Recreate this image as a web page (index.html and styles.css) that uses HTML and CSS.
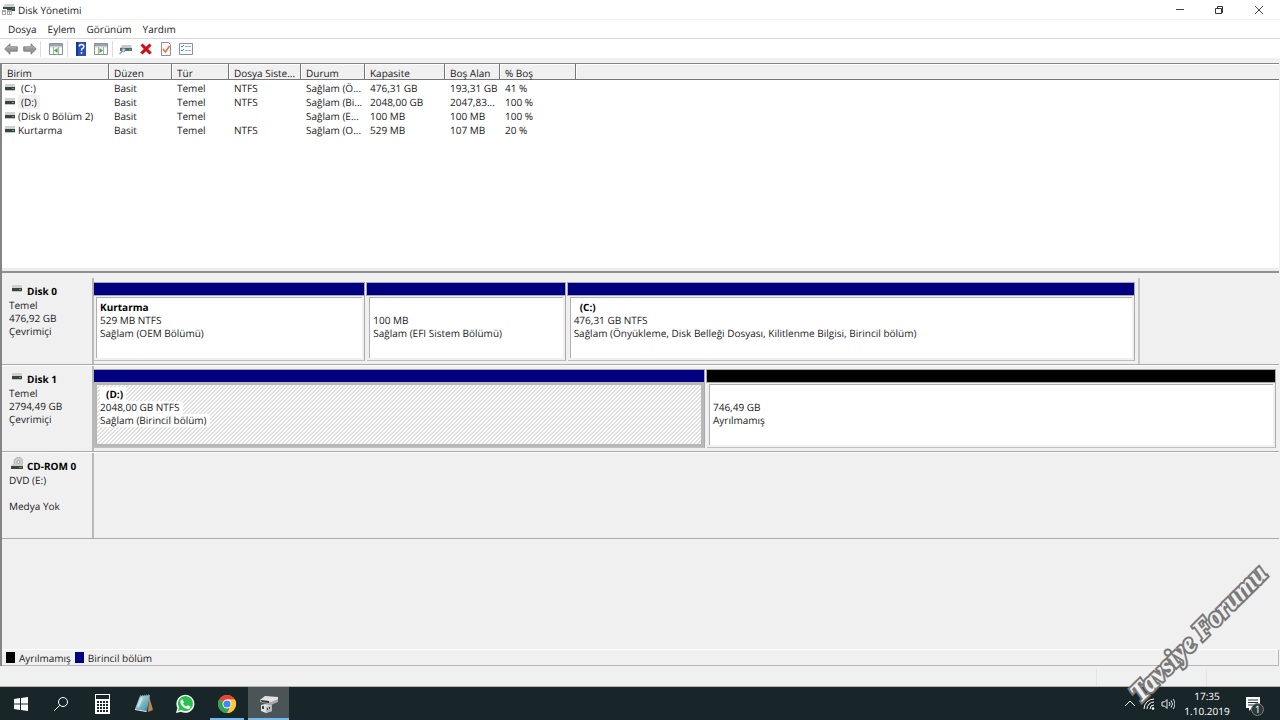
FILE: index.html
```html
<!DOCTYPE html>
<html lang="tr">
<head>
<meta charset="utf-8">
<meta name="viewport" content="width=device-width, initial-scale=1">
<title>Disk Yönetimi</title>
<link rel="stylesheet" href="styles.css">
</head>
<body>
<svg class="defs" aria-hidden="true">
  <defs>
    <linearGradient id="note" x1="0" y1="0" x2="1" y2="1"><stop offset="0" stop-color="#d6edf3"/><stop offset="1" stop-color="#2f86a0"/></linearGradient>
    <symbol id="drive" viewBox="0 0 12 7"><path d="M1 0h10v3H1z" fill="#d0d0d0"/><path d="M1 3h10v3H1z" fill="#3c4145"/><path d="M1 6h10v1H1z" fill="#c5c5c5"/><path d="M8 4h2v1H8z" fill="#35c840"/></symbol>
    <symbol id="panel" viewBox="0 0 14 12"><path d="M.5.5h13v11H.5z" fill="#fafafa" stroke="#8b9196"/><path d="M1 1h12v2H1z" fill="#9aa3aa"/><path d="M1 3h12v1.500H1z" fill="#cfd3d6"/><path d="M4.500 4v7M9.500 4v7" stroke="#a8adb1"/></symbol>
    <symbol id="arrow" viewBox="0 0 14 12"><path d="M.7 6 6 .8v3h7.300v4.400H6v3z" fill="#969696" stroke="#747474" stroke-width=".8"/><path d="M2.500 5.600 5.300 3v1.800h7" fill="none" stroke="#bbb" stroke-width=".8"/></symbol>
  </defs>
</svg>
<div class="window">
  <header class="titlebar">
    <svg class="app-icon" viewBox="0 0 13 13"><path d="M3 1h9l1 3H1z" fill="#cfcfcf"/><path d="M1 4h12v4H5V6H1z" fill="#41484b"/><path d="M10 5h2v1h-2z" fill="#39be42"/><path d="M0 7h4v5H0zM5 7h5v5H5z" fill="#a6a6a6"/><path d="M1 9h2v2H1zM6 9h1v2H6zM8 9h1v2H8z" fill="#fff"/></svg>
    <h1 class="title">Disk Yönetimi</h1>
    <div class="window-buttons">
      <button class="window-button" aria-label="Simge durumuna küçült"><svg viewBox="0 0 10 10"><path d="M1 4.500h8" stroke="#444"/></svg></button>
      <button class="window-button" aria-label="Önceki boyut"><svg viewBox="0 0 10 10"><path d="M1.500 3.500h6v5h-6zM3.500 3V1.500h5v6H8" fill="none" stroke="#333"/></svg></button>
      <button class="window-button" aria-label="Kapat"><svg viewBox="0 0 10 10"><path d="m1 1 8 8M9 1 1 9" stroke="#333" stroke-width=".9"/></svg></button>
    </div>
  </header>
  <nav class="menubar">
    <button class="menu">Dosya</button><button class="menu">Eylem</button><button class="menu">Görünüm</button><button class="menu">Yardım</button>
  </nav>
  <div class="toolbar" role="toolbar">
    <div class="tool-group">
      <button class="tool" aria-label="Geri"><svg viewBox="0 0 14 12"><use href="#arrow"/></svg></button>
      <button class="tool" aria-label="İleri"><svg viewBox="0 0 14 12"><g transform="translate(14 0) scale(-1 1)"><use href="#arrow"/></g></svg></button>
    </div>
    <div class="tool-group">
      <button class="tool" aria-label="Konsol ağacı"><svg viewBox="0 0 14 12"><use href="#panel"/><path d="m8.500 5-3.500 2.500L8.500 10z" fill="#3da936"/></svg></button>
    </div>
    <div class="tool-group">
      <button class="tool" aria-label="Yardım"><svg viewBox="0 0 14 14"><path d="M2 0h10v14H2z" fill="#2850b5"/><path d="M2 0h2v14H2z" fill="#153a95"/><path d="M5.300 4.500Q5.300 2.500 7.500 2.500T9.800 4.500Q9.800 6 8.200 6.700 7.500 7.200 7.500 8.500M7.500 10v1.700" fill="none" stroke="#fff" stroke-width="1.500"/></svg></button>
      <button class="tool" aria-label="Eylem bölmesi"><svg viewBox="0 0 14 12"><use href="#panel"/><path d="m5.500 5 3.500 2.500L5.500 10z" fill="#3da936"/></svg></button>
    </div>
    <div class="tool-group">
      <button class="tool" aria-label="Diskleri yeniden tara"><svg viewBox="0 0 14 12"><path d="M3 2h9l1 3H1z" fill="#c4c9cc"/><path d="M1 5h12v3H1z" fill="#55666c"/><path d="M10 6h2v1h-2z" fill="#3dd34b"/><circle cx="4.500" cy="7" r="1.800" fill="#bdd6e2" stroke="#778b94"/><path d="m3 8.500-2.500 2.500" stroke="#7b9eae" stroke-width="1.500"/></svg></button>
      <button class="tool" aria-label="Sil"><svg viewBox="0 0 14 12"><path d="m1.500 2.500 2-2L7 3.700 10.500.5l2 2L9.200 6l3.600 3.500-2.300 2L7 8.300l-3.500 3.200-2.300-2L4.800 6z" fill="#d50c16"/></svg></button>
      <button class="tool" aria-label="Özellikler"><svg viewBox="0 0 14 14"><path d="M2.500.500h7l2 2v11h-9z" fill="#f7f8fa" stroke="#8c929b"/><path d="m4 7 2.500 3 4-6" fill="none" stroke="#ee7034" stroke-width="1.500"/></svg></button>
      <button class="tool" aria-label="Tüm görevler"><svg viewBox="0 0 14 12"><path d="M.5.500h13v11H.5z" fill="#f7faff" stroke="#87939f"/><path d="m2 3 1 1 2-2M2 7l1 1 2-2" fill="none" stroke="#298be5"/><path d="M6 3.500h6M6 7.500h6" stroke="#a5b8ca"/></svg></button>
    </div>
  </div>
  <main class="console">
    <section class="volumes">
      <table class="volume-table">
        <colgroup><col class="c-name"><col class="c-layout"><col class="c-type"><col class="c-fs"><col class="c-status"><col class="c-capacity"><col class="c-free"><col class="c-percent"><col></colgroup>
        <thead><tr><th>Birim</th><th>Düzen</th><th>Tür</th><th>Dosya Siste...</th><th>Durum</th><th>Kapasite</th><th>Boş Alan</th><th>% Boş</th><th></th></tr></thead>
        <tbody>
          <tr><td><div class="volume"><svg class="drive"><use href="#drive"/></svg><span class="letter">(C:)</span></div></td><td>Basit</td><td>Temel</td><td>NTFS</td><td>Sağlam (Ö...</td><td>476,31 GB</td><td>193,31 GB</td><td>41 %</td><td></td></tr>
          <tr><td><div class="volume"><svg class="drive"><use href="#drive"/></svg><span class="letter selected">(D:)</span></div></td><td>Basit</td><td>Temel</td><td>NTFS</td><td>Sağlam (Bi...</td><td>2048,00 GB</td><td>2047,83...</td><td>100 %</td><td></td></tr>
          <tr><td><div class="volume"><svg class="drive"><use href="#drive"/></svg><span>(Disk 0 Bölüm 2)</span></div></td><td>Basit</td><td>Temel</td><td></td><td>Sağlam (E...</td><td>100 MB</td><td>100 MB</td><td>100 %</td><td></td></tr>
          <tr><td><div class="volume"><svg class="drive"><use href="#drive"/></svg><span>Kurtarma</span></div></td><td>Basit</td><td>Temel</td><td>NTFS</td><td>Sağlam (O...</td><td>529 MB</td><td>107 MB</td><td>20 %</td><td></td></tr>
        </tbody>
      </table>
    </section>
    <section class="disks">
      <article class="disk">
        <div class="disk-label"><h2 class="disk-name"><svg class="drive"><use href="#drive"/></svg>Disk 0</h2><p>Temel</p><p>476,92 GB</p><p>Çevrimiçi</p></div>
        <div class="partitions short">
          <div class="partition recovery"><div class="bar"></div><div class="info"><b>Kurtarma</b><span>529 MB NTFS</span><span>Sağlam (OEM Bölümü)</span></div></div>
          <div class="partition efi"><div class="bar"></div><div class="info"><b></b><span>100 MB</span><span>Sağlam (EFI Sistem Bölümü)</span></div></div>
          <div class="partition system"><div class="bar"></div><div class="info"><b class="indent">(C:)</b><span>476,31 GB NTFS</span><span>Sağlam (Önyükleme, Disk Belleği Dosyası, Kilitlenme Bilgisi, Birincil bölüm)</span></div></div>
        </div>
      </article>
      <article class="disk">
        <div class="disk-label"><h2 class="disk-name"><svg class="drive"><use href="#drive"/></svg>Disk 1</h2><p>Temel</p><p>2794,49 GB</p><p>Çevrimiçi</p></div>
        <div class="partitions">
          <div class="partition data"><div class="bar"></div><div class="info hatched"><b class="indent">(D:)</b><span>2048,00 GB NTFS</span><span>Sağlam (Birincil bölüm)</span></div></div>
          <div class="partition unallocated"><div class="bar black"></div><div class="info"><b></b><span>746,49 GB</span><span>Ayrılmamış</span></div></div>
        </div>
      </article>
      <article class="disk">
        <div class="disk-label"><h2 class="disk-name"><svg class="cdrom" viewBox="0 0 12 14"><circle cx="7.500" cy="5" r="4.500" fill="#d1d3d3" stroke="#929898" stroke-width=".7"/><circle cx="7.500" cy="5" r="1.500" fill="#fff" stroke="#999"/><path d="M2 7h8l2 2H0z" fill="#ccc"/><path d="M0 9h12v3H0z" fill="#3c4145"/><path d="M8 10h3v1H8z" fill="#35c840"/></svg>CD-ROM 0</h2><p>DVD (E:)</p><p></p><p>Medya Yok</p></div>
      </article>
    </section>
    <footer class="legend"><span class="swatch black"></span><span>Ayrılmamış</span><span class="swatch"></span><span>Birincil bölüm</span></footer>
  </main>
  <div class="statusbar"><span class="status-cell"></span></div>
</div>
<footer class="taskbar">
  <nav class="apps">
    <button class="task" aria-label="Başlat"><svg viewBox="0 0 20 20"><path d="m3 5 6-1v5.500H3zM10 4l7-1v6.500h-7zM3 10.500h6V16l-6-1zM10 10.500h7V17l-7-1z" fill="#fff"/></svg></button>
    <button class="task" aria-label="Ara"><svg viewBox="0 0 20 20"><circle cx="11" cy="8" r="4.500" fill="none" stroke="#fff"/><path d="m7.700 11.300-5.500 5.500" stroke="#fff"/></svg></button>
    <button class="task" aria-label="Hesap Makinesi"><svg viewBox="0 0 20 20"><path d="M2 0h15v20H2z" fill="#fff"/><path d="M3 1h13v4H3z" fill="#192629"/><path d="M4 7h2v2H4zm3 0h2v2H7zm3 0h2v2h-2zm3 0h2v2h-2zM4 10h2v2H4zm3 0h2v2H7zm3 0h2v2h-2zm3 0h2v2h-2zM4 13h2v2H4zm3 0h2v2H7zm3 0h2v2h-2zm3 0h2v2h-2zM4 16h2v2H4zm3 0h2v2H7zm3 0h2v2h-2zm3 0h2v2h-2z" fill="#192629"/></svg></button>
    <button class="task" aria-label="Not Defteri"><svg viewBox="0 0 20 20"><path d="m15 2 4 14-5 2z" fill="#b9864f"/><path d="M6 2 16 1l-3 16-12-2z" fill="url(#note)"/><path d="m1 15 12 2-1 1-11-2z" fill="#e6f0f2"/><path d="m6 2 10-1" stroke="#85959b" stroke-width="1.500" stroke-dasharray="1 1"/><path d="M8 4 4 13" stroke="#eaf8fb" opacity=".6" stroke-width="2"/></svg></button>
    <button class="task" aria-label="WhatsApp"><svg viewBox="0 0 20 20"><path d="m1 19 1.400-5A9 9 0 1 1 6 17.700z" fill="#fff"/><path d="m3 17 1-3.500A7.500 7.500 0 1 1 6.500 16z" fill="#27c34b"/><path d="M7.500 5.300 8.900 8.500 8 9.700q1.300 2.100 3.400 2.900l1.300-1.300 2.900 1.500q-.3 2.400-3 2.200Q7.200 13.800 5.500 9q-.7-3 2-3.700z" fill="#fff"/></svg></button>
    <button class="task running" aria-label="Google Chrome"><svg viewBox="0 0 20 20"><circle cx="10" cy="10" r="9" fill="#fcc934"/><path d="M10 10 2.200 5.500A9 9 0 0 1 17.800 5.500H10z" fill="#e94335"/><path d="M2.200 5.500A9 9 0 0 0 10 19l4-6.700-4-2.300z" fill="#31a353"/><path d="M10 5.500h7.800A9 9 0 0 1 10 19l3.900-6.700z" fill="#fcc934"/><circle cx="10" cy="10" r="4.500" fill="#fff"/><circle cx="10" cy="10" r="3.600" fill="#4285f4"/></svg></button>
    <button class="task running active" aria-label="Disk Yönetimi"><svg viewBox="0 0 20 20"><path d="m1 6 5-4 13 1v4l-7 3z" fill="#e2e2e2"/><path d="m1 6 11 2 7-3v3l-7 3L1 8z" fill="#a9a9a9"/><path d="m2 6 8 1v2L3 8z" fill="#333b36"/><path d="m2 11 4-1 7 1v6l-6 2-5-2z" fill="#e0e0e0"/><path d="m7 13 6-2v6l-6 2z" fill="#b9b9b9"/><path d="M3 12h2v3H3zm5 2h1v2H8zm2-1h1v2h-1z" fill="#444"/></svg></button>
  </nav>
  <div class="tray">
    <button class="tray-icon" aria-label="Gizli simgeler"><svg viewBox="0 0 14 14"><path d="m2 9 5-5 5 5" fill="none" stroke="#fff"/></svg></button>
    <button class="tray-icon" aria-label="Ağ"><svg viewBox="0 0 14 14"><path d="M2 12A10 10 0 0 1 12 2M5 12a7 7 0 0 1 7-7M8 12a4 4 0 0 1 4-4" fill="none" stroke="#fff"/><circle cx="11" cy="11.500" r="1.300" fill="#fff"/></svg></button>
    <button class="tray-icon" aria-label="Ses"><svg viewBox="0 0 14 14"><path d="M1 5h2.500L6 2.500v9L3.500 9H1zM8 5q2 2 0 4M10 3.500q3 3.500 0 7M12 2q4 5 0 10" fill="none" stroke="#fff" stroke-width=".9"/></svg></button>
    <time class="clock" datetime="2019-10-01T17:35"><span>17:35</span><span>1.10.2019</span></time>
    <button class="notifications" aria-label="Bildirimler"><svg viewBox="0 0 16 16"><path d="M1 1h14v11H7l-3 3v-3H1z" fill="#fff"/><path d="M3 4h10M3 6.500h10M3 9h7" stroke="#243235"/></svg><span class="badge">1</span></button>
  </div>
</footer>
<div class="watermark">Tavsiye Forumu</div>
</body>
</html>
```

FILE: styles.css
```css
* { box-sizing: border-box; }
body {
  margin: 0;
  min-height: 100vh;
  display: flex;
  flex-direction: column;
  background: #f0f0f0;
  color: #222;
  font: 10px/14px "Open Sans", "Noto Sans", sans-serif;
  text-rendering: geometricPrecision;
  position: relative;
  overflow-x: hidden;
}
button { border: 0; padding: 0; margin: 0; background: none; color: inherit; font: inherit; text-rendering: inherit; }
h1, h2, p { margin: 0; font: inherit; }
svg { display: block; flex: none; }
.defs { position: absolute; width: 0; height: 0; }
.window { flex: 1; display: flex; flex-direction: column; }

.titlebar { display: flex; align-items: center; height: 20px; padding-left: 2px; background: #fff; border-bottom: 1px solid #f0f0f0; }
.app-icon { width: 13px; height: 13px; }
.title { margin-left: 3px; flex: 1; }
.window-buttons { display: flex; }
.window-button { width: 39px; height: 19px; display: grid; place-items: center; }
.window-button svg { width: 10px; height: 10px; }
.window-button:last-child { width: 42px; }
.menubar { display: flex; gap: 11px; height: 19px; align-items: center; padding-left: 8px; background: #fff; border-bottom: 1px solid #d6d6d6; }
.toolbar { display: flex; height: 19px; align-items: center; padding-left: 3px; background: #fff; }
.tool-group { display: flex; gap: 5px; padding-right: 4px; margin-right: 5px; border-right: 1px solid #dcdcdc; }
.tool-group:last-child { border: 0; }
.tool { width: 15px; height: 16px; display: grid; place-items: center; }
.tool svg { width: 14px; height: 14px; }
.tool-group:first-child { gap: 4px; padding-right: 3px; margin-right: 7px; }

.console { flex: 1; display: flex; flex-direction: column; margin: 5px 1px 0 0; border: 1px solid #858585; border-width: 1px 0 0 2px; }
.volumes { height: 209px; background: #fff; border-bottom: 2px solid #909090; box-shadow: inset 0 -3px #ececec; flex: none; }
.volume-table { width: 100%; table-layout: fixed; border-collapse: separate; border-spacing: 0; }
.c-name { width: 107px; }
.c-layout { width: 63px; }
.c-type { width: 57px; }
.c-fs { width: 72px; }
.c-status { width: 64px; }
.c-capacity { width: 80px; }
.c-free { width: 55px; }
.c-percent { width: 76px; }
th, td { height: 14px; padding: 0 0 0 5px; text-align: left; font-weight: normal; white-space: nowrap; }
th { height: 16px; padding-top: 3px; line-height: 12px; background: #f0f0f0; border-right: 1px solid #777; border-bottom: 1px solid #777; box-shadow: inset 1px 1px #fff; }
th:last-child { border-right: 0; }
tbody tr:first-child td { padding-top: 1px; }
td:first-child { padding-left: 2px; }
.drive { width: 12px; height: 7px; }
.volume { display: flex; align-items: flex-start; gap: 2px; }
.volume .drive { margin-top: 3px; }
.letter { padding: 0 3px; }
.selected { background: #f0f0f0; }

.disks { flex: 1; padding-top: 5px; }
.disk { display: flex; height: 86px; margin-bottom: 1px; box-shadow: 0 1px #aaa; }
.disk + .disk { border-top: 1px solid #fff; }
.disk-label { width: 92px; flex: none; padding: 6px 0 0 7px; border-right: 2px solid #b8b8b8; line-height: 13px; }
.disk-label p { min-height: 13px; }
.disk-name { display: flex; gap: 4px; line-height: 15px; font-weight: 700; color: #000; padding-left: 2px; }
.disk-name .drive { margin-top: 1px; }
.cdrom { width: 12px; height: 14px; margin-top: -2px; }
.partitions { flex: 1; display: flex; gap: 2px; padding: 5px 3px 3px 0; }
.partitions.short { flex: 0 1 1046px; border-right: 2px solid #c8c8c8; }
.disk + .disk .partitions { padding-top: 4px; }
.partition { display: flex; flex-direction: column; min-width: 0; flex: 1 1 0; border-right: 1px solid #aaa; border-bottom: 1px solid #c0c0c0; }
.recovery { flex-grow: 271; }
.efi { flex-grow: 198; }
.system { flex-grow: 568; }
.data { flex-grow: 611; }
.unallocated { flex-grow: 569; }
.bar { height: 12px; background: #000080; outline: 1px solid #aaa; }
.black { background: #000; }
.info { flex: 1; display: flex; flex-direction: column; align-items: flex-start; margin: 2px; padding: 2px 3px 0; line-height: 13px; border: 1px solid #b0b0b0; border-width: 1px 0 0 1px; background: #fff; overflow: hidden; }
.info b { min-height: 14px; line-height: 14px; color: #000; }
.info span { white-space: nowrap; }
.indent { padding-left: 6px; }
.hatched { border: 1px solid #b5b5b5; outline: 2px solid #b8b8b8; background: linear-gradient(135deg, #fff 25%, #dfdfdf 25% 50%, #fff 50% 75%, #dfdfdf 75%) 0 0 / 4px 4px; }
.hatched b, .hatched span { background: #fff; padding-right: 3px; }

.legend { display: flex; align-items: center; gap: 4px; height: 17px; padding-left: 4px; border: 1px solid #b8b8b8; border-top-color: #fff; border-left: 0; }
.swatch { width: 9px; height: 11px; background: #000080; }
.swatch.black { background: #000; }
.statusbar { height: 21px; display: flex; justify-content: flex-end; padding: 3px 73px 0 0; border-bottom: 1px solid #b5b5b5; }
.status-cell { width: 111px; border: 1px solid #e3e3e3; border-width: 0 1px; }

.taskbar { height: 33px; display: flex; justify-content: space-between; background: #192629; color: #fff; }
.apps, .tray { display: flex; align-items: center; }
.task { width: 41px; height: 33px; display: grid; place-items: center; }
.task svg { width: 20px; height: 20px; }
.task.running { border-bottom: 2px solid #76b9ed; padding-top: 2px; }
.task.running:not(.active) { width: 34px; margin: 0 4px 0 5px; }
.task.active { background: #4b5557; }
.tray { padding-right: 19px; }
.tray-icon { width: 19px; height: 33px; display: grid; place-items: center; }
.tray-icon svg { width: 14px; height: 14px; }
.clock { display: flex; flex-direction: column; align-items: center; width: 60px; line-height: 15px; }
.notifications { position: relative; margin-left: 8px; width: 16px; height: 16px; }
.notifications svg { width: 16px; height: 16px; }
.badge { position: absolute; left: 6px; top: 7px; width: 13px; height: 13px; border: 1px solid #778082; border-radius: 50%; background: #2b383b; text-align: center; line-height: 11px; }
.watermark {
  position: absolute;
  right: -18px;
  bottom: 72px;
  width: 200px;
  text-align: center;
  font: italic 700 27px/30px "Liberation Serif", serif;
  color: #f0f0f0;
  -webkit-text-stroke: 4px #777;
  paint-order: stroke fill;
  transform: rotate(-45deg);
  pointer-events: none;
}
```
